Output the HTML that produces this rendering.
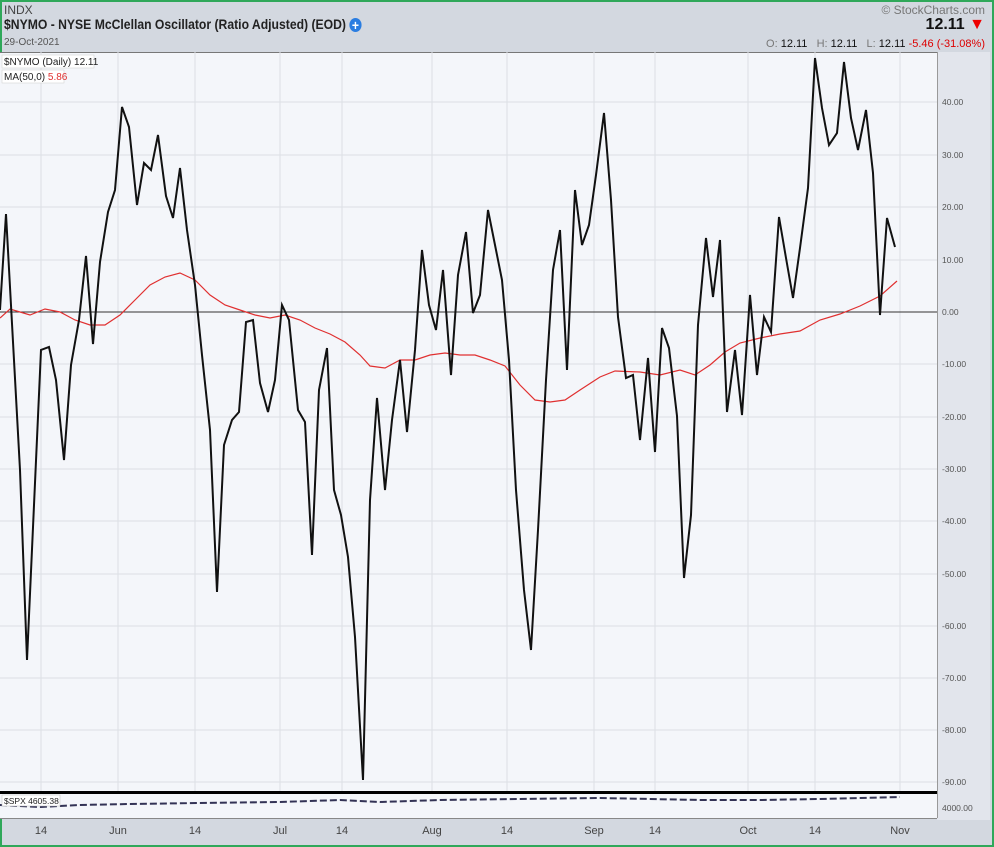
<!DOCTYPE html><html><head><style>
body{margin:0;width:994px;height:847px;overflow:hidden;font-family:"Liberation Sans",sans-serif;}
#f{position:absolute;left:0;top:0;width:990px;height:843px;border:2px solid #2fa85a;background:#d3d8e0;}
.t{position:absolute;white-space:nowrap}
</style></head><body><div id="f"></div>
<div class="t" style="left:4px;top:3px;font-size:12px;color:#444">INDX</div>
<div class="t" style="left:4px;top:16px;font-size:14px;font-weight:bold;color:#222;transform:scaleX(0.87);transform-origin:0 0">$NYMO - NYSE McClellan Oscillator (Ratio Adjusted) (EOD) <span style="display:inline-block;width:14px;height:14px;border-radius:50%;background:#2a7de1;color:#fff;font-size:14px;line-height:14px;text-align:center;vertical-align:-1px">+</span></div>
<div class="t" style="left:4px;top:37px;font-size:10px;color:#555">29-Oct-2021</div>
<div class="t" style="right:9px;top:3px;font-size:12px;color:#777">© StockCharts.com</div>
<div class="t" style="right:9px;top:16px;font-size:16px;font-weight:bold;color:#111">12.11 <span style="color:#e00">▼</span></div>
<div class="t" style="right:9px;top:38px;font-size:11px;color:#777">O: <b style="color:#111;font-weight:normal">12.11</b> &nbsp; H: <b style="color:#111;font-weight:normal">12.11</b> &nbsp; L: <b style="color:#111;font-weight:normal">12.11</b> <span style="color:#d00">-5.46 (-31.08%)</span></div>
<svg style="position:absolute;left:0;top:0" width="994" height="847">
<rect x="0" y="52" width="937" height="740" fill="#f4f6fa"/>
<rect x="937" y="52" width="53" height="768" fill="#e2e5ec"/>
<line x1="0" y1="52.5" x2="937" y2="52.5" stroke="#777"/>
<g stroke="#dcdfe4">
<line x1="41" y1="52" x2="41" y2="818"/><line x1="118" y1="52" x2="118" y2="818"/><line x1="195" y1="52" x2="195" y2="818"/><line x1="280" y1="52" x2="280" y2="818"/><line x1="342" y1="52" x2="342" y2="818"/><line x1="432" y1="52" x2="432" y2="818"/><line x1="507" y1="52" x2="507" y2="818"/><line x1="594" y1="52" x2="594" y2="818"/><line x1="655" y1="52" x2="655" y2="818"/><line x1="748" y1="52" x2="748" y2="818"/><line x1="815" y1="52" x2="815" y2="818"/><line x1="900" y1="52" x2="900" y2="818"/>
<line x1="0" y1="102" x2="937" y2="102"/><line x1="0" y1="155" x2="937" y2="155"/><line x1="0" y1="207" x2="937" y2="207"/><line x1="0" y1="260" x2="937" y2="260"/><line x1="0" y1="364" x2="937" y2="364"/><line x1="0" y1="417" x2="937" y2="417"/><line x1="0" y1="469" x2="937" y2="469"/><line x1="0" y1="521" x2="937" y2="521"/><line x1="0" y1="574" x2="937" y2="574"/><line x1="0" y1="626" x2="937" y2="626"/><line x1="0" y1="678" x2="937" y2="678"/><line x1="0" y1="730" x2="937" y2="730"/><line x1="0" y1="782" x2="937" y2="782"/>
</g>
<line x1="0" y1="312" x2="937" y2="312" stroke="#333"/>
<polyline fill="none" stroke="#e03030" stroke-width="1.2" points="0,318 10,309 20,312 30,315 45,309 60,312 75,320 90,325 105,325 120,315 135,300 150,285 165,277 180,273 195,280 210,295 225,305 240,310 255,315 270,318 285,315 300,320 315,328 330,334 345,342 360,355 370,366 385,368 400,360 415,360 430,355 445,353 460,355 475,355 490,360 505,366 520,385 535,400 550,402 565,400 580,390 600,377 615,371 640,372 660,375 680,370 695,375 710,365 725,352 740,343 760,338 780,334 800,331 820,320 840,314 860,306 880,296 897,281"/>
<polyline fill="none" stroke="#111" stroke-width="2" stroke-linejoin="miter" points="0,310 6,214 20,470 27,660 41,350 49,347 56,380 64,460 71,365 79,320 86,256 93,344 100,262 108,212 115,190 122,107 129,127 137,205 144,163 151,170 158,135 166,196 173,218 180,168 187,230 195,285 202,355 210,430 217,592 224,445 232,420 239,412 246,322 253,320 260,383 268,412 275,380 282,305 289,320 298,410 305,422 312,555 319,390 327,348 334,490 341,515 348,557 355,637 363,780 370,500 377,398 385,490 392,420 400,360 407,432 415,350 422,250 429,305 436,330 443,270 451,375 458,275 466,232 473,313 480,295 488,210 495,245 502,280 509,360 516,490 524,590 531,650 538,530 546,380 553,270 560,230 567,370 575,190 582,245 589,225 596,175 604,113 611,200 618,317 626,378 633,375 640,440 648,358 655,452 662,328 669,348 677,416 684,578 691,515 698,325 706,238 713,297 720,240 727,412 735,350 742,415 750,295 757,375 764,317 771,332 779,217 786,258 793,298 800,248 808,188 815,58 822,108 829,145 837,133 844,62 851,118 858,150 866,110 873,173 880,315 887,218 895,247"/>
<rect x="0" y="794" width="937" height="24" fill="#f4f6fa"/>
<line x1="0" y1="792.5" x2="937" y2="792.5" stroke="#000" stroke-width="3"/>
<line x1="0" y1="818.5" x2="937" y2="818.5" stroke="#888"/>
<line x1="937.5" y1="52" x2="937.5" y2="818" stroke="#999"/>
<polyline fill="none" stroke="#335" stroke-width="2" stroke-dasharray="7,3" points="0,805 40,807 80,805 130,804 200,803 280,802 340,800 380,802 440,800 520,799 600,798 650,799 700,800 760,800 820,799 860,798 900,797"/>
<rect x="2" y="795" width="58" height="11" fill="#fff" stroke="#bbb" stroke-width="0.5"/>
<text x="4" y="804" font-size="8.5" fill="#222">$SPX 4605.38</text>
<rect x="2" y="55" width="92" height="13" fill="#fff" stroke="#ccc" stroke-width="0.5"/><text x="4" y="65" font-size="10" fill="#222">$NYMO (Daily) 12.11</text>
<rect x="2" y="70" width="62" height="13" fill="#fff" stroke="#ccc" stroke-width="0.5"/><text x="4" y="80" font-size="10" fill="#222">MA(50,0) <tspan fill="#e03030">5.86</tspan></text>
<g font-size="8.5" fill="#555">
<text x="942" y="105">40.00</text><text x="942" y="158">30.00</text><text x="942" y="210">20.00</text><text x="942" y="263">10.00</text><text x="942" y="315">0.00</text><text x="942" y="367">-10.00</text><text x="942" y="420">-20.00</text><text x="942" y="472">-30.00</text><text x="942" y="524">-40.00</text><text x="942" y="577">-50.00</text><text x="942" y="629">-60.00</text><text x="942" y="681">-70.00</text><text x="942" y="733">-80.00</text><text x="942" y="785">-90.00</text><text x="942" y="811">4000.00</text>
</g>
<g font-size="11" fill="#444" text-anchor="middle">
<text x="41" y="834">14</text><text x="118" y="834">Jun</text><text x="195" y="834">14</text><text x="280" y="834">Jul</text><text x="342" y="834">14</text><text x="432" y="834">Aug</text><text x="507" y="834">14</text><text x="594" y="834">Sep</text><text x="655" y="834">14</text><text x="748" y="834">Oct</text><text x="815" y="834">14</text><text x="900" y="834">Nov</text>
</g>
</svg>
</body></html>
